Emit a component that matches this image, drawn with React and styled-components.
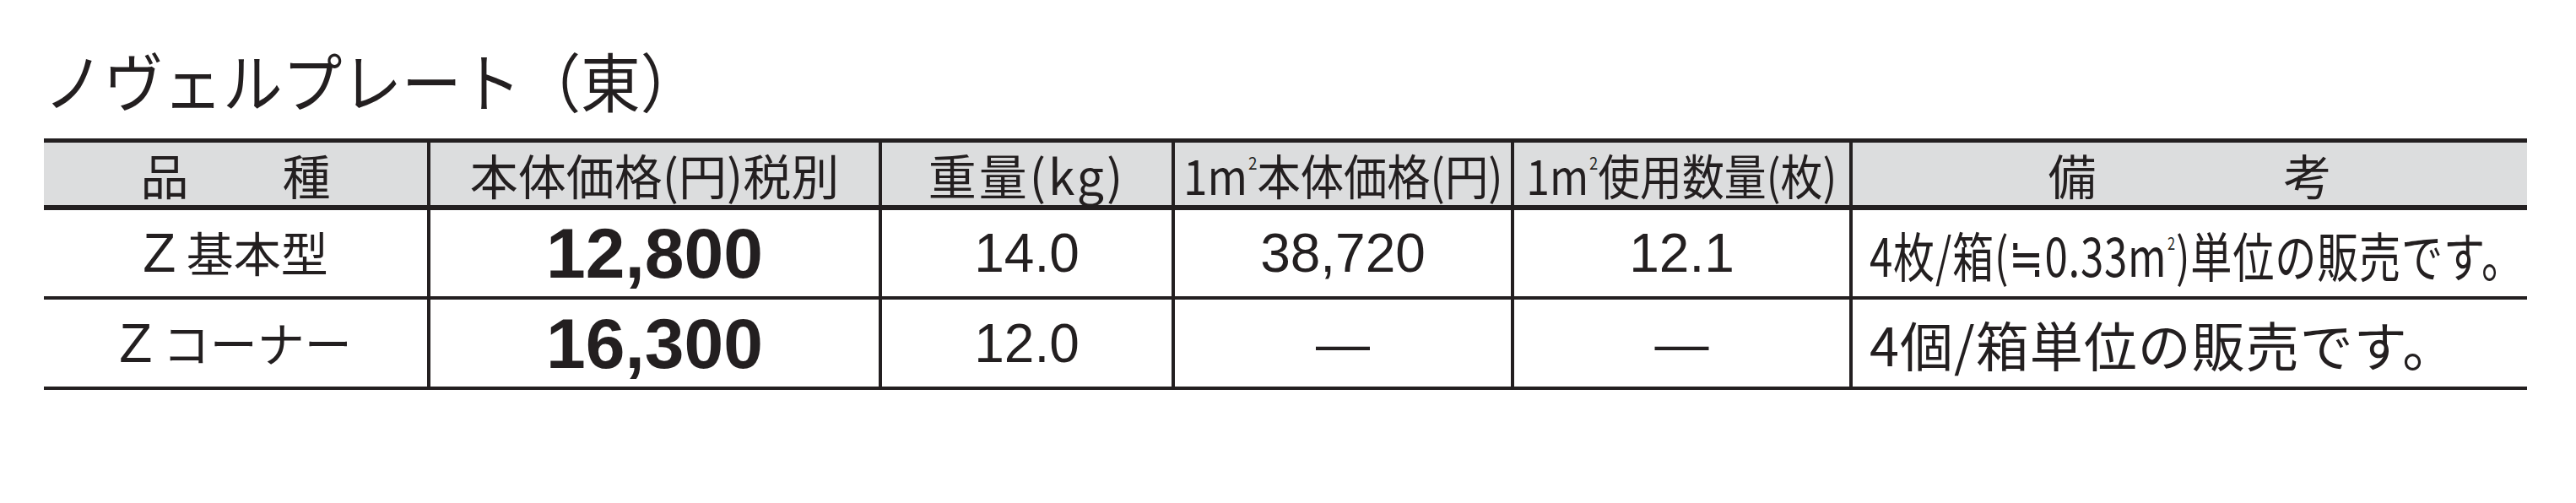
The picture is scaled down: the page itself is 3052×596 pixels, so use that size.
import React from "react";
import styled, { createGlobalStyle } from "styled-components";

const ink = "#231f20";

const GlobalStyle = createGlobalStyle`
  html, body {
    margin: 0;
    padding: 0;
    background: #fff;
  }
  body {
    font-family: "Noto Sans CJK JP", "Liberation Sans", sans-serif;
    color: ${ink};
  }
`;

const Page = styled.div`
  width: 3052px;
  height: 596px;
  box-sizing: border-box;
  padding: 56px 58px 0 52px;
`;

const Title = styled.h1`
  margin: 0 0 32px;
  font-size: 76px;
  line-height: 76px;
  font-weight: 400;
  white-space: nowrap;
  transform: scaleX(0.93);
  transform-origin: left center;
`;

// column widths measured off the sheet (each includes its left rule)
const cols = "454px 535px 347px 402px 401px 803px";

const Sheet = styled.div`
  border-top: 5px solid ${ink};
  border-bottom: 4px solid ${ink};
`;

const Row = styled.div`
  display: grid;
  grid-template-columns: ${cols};
  height: ${(p) => p.$h}px;
  background: ${(p) => (p.$head ? "#dcddde" : "#fff")};
  border-bottom: ${(p) => (p.$rule ? `${p.$rule}px solid ${ink}` : "none")};
`;

const Cell = styled.div`
  display: flex;
  align-items: center;
  justify-content: ${(p) => (p.$left ? "flex-start" : "center")};
  padding-left: ${(p) => (p.$left ? "20px" : "0")};
  border-left: 4px solid ${ink};
  box-sizing: border-box;
  white-space: nowrap;
  min-width: 0;

  &:first-child {
    border-left: none;
  }
`;

const HeadText = styled.span`
  display: inline-block;
  font-size: 57px;
  line-height: 1;
  letter-spacing: ${(p) => p.$ls || 0}px;
  transform: scaleX(${(p) => p.$sx || 1});
`;

const Spread = styled.span`
  display: flex;
  gap: ${(p) => p.$gap}px;
  font-size: 57px;
  line-height: 1;
`;

const Sup = styled.span`
  font-size: 21px;
  vertical-align: ${(p) => p.$up || 30}px;
  margin-left: 1px;
`;

const Name = styled.span`
  font-size: 56px;
  line-height: 1;
`;

const Latin = styled.span`
  font-family: "Liberation Sans", sans-serif;
  font-size: 64px;
`;

const Price = styled.span`
  font-family: "Liberation Sans", sans-serif;
  font-weight: 700;
  font-size: 84px;
  line-height: 1;
`;

const Num = styled.span`
  font-family: "Liberation Sans", sans-serif;
  font-size: 64px;
  line-height: 1;
`;

const Note = styled.span`
  display: inline-block;
  font-size: 63px;
  line-height: 1;
  letter-spacing: 1px;
  transform: scaleX(${(p) => p.$sx || 1});
  transform-origin: left center;
`;

const App = () => {
  return (
    <Page>
      <GlobalStyle />
      <Title>ノヴェルプレート（東）</Title>

      <Sheet>
        <Row $head $h={74} $rule={6}>
          <Cell>
            <Spread $gap={111}>
              <span>品</span>
              <span>種</span>
            </Spread>
          </Cell>
          <Cell>
            <HeadText>本体価格(円)税別</HeadText>
          </Cell>
          <Cell>
            <HeadText $ls={3}>重量(kg)</HeadText>
          </Cell>
          <Cell>
            <HeadText $sx={0.9}>
              1m<Sup>2</Sup>本体価格(円)
            </HeadText>
          </Cell>
          <Cell>
            <HeadText $sx={0.875}>
              1m<Sup>2</Sup>使用数量(枚)
            </HeadText>
          </Cell>
          <Cell>
            <Spread $gap={222}>
              <span>備</span>
              <span>考</span>
            </Spread>
          </Cell>
        </Row>

        <Row $h={102} $rule={4}>
          <Cell>
            <Name>
              <Latin>Z</Latin> 基本型
            </Name>
          </Cell>
          <Cell>
            <Price>12,800</Price>
          </Cell>
          <Cell>
            <Num>14.0</Num>
          </Cell>
          <Cell>
            <Num>38,720</Num>
          </Cell>
          <Cell>
            <Num>12.1</Num>
          </Cell>
          <Cell $left>
            <Note $sx={0.78}>
              4枚/箱(≒0.33m<Sup $up={32}>2</Sup>)単位の販売です。
            </Note>
          </Cell>
        </Row>

        <Row $h={103}>
          <Cell>
            <Name>
              <Latin>Z</Latin> コーナー
            </Name>
          </Cell>
          <Cell>
            <Price>16,300</Price>
          </Cell>
          <Cell>
            <Num>12.0</Num>
          </Cell>
          <Cell>
            <Num>—</Num>
          </Cell>
          <Cell>
            <Num>—</Num>
          </Cell>
          <Cell $left>
            <Note>4個/箱単位の販売です。</Note>
          </Cell>
        </Row>
      </Sheet>
    </Page>
  );
};

export default App;
